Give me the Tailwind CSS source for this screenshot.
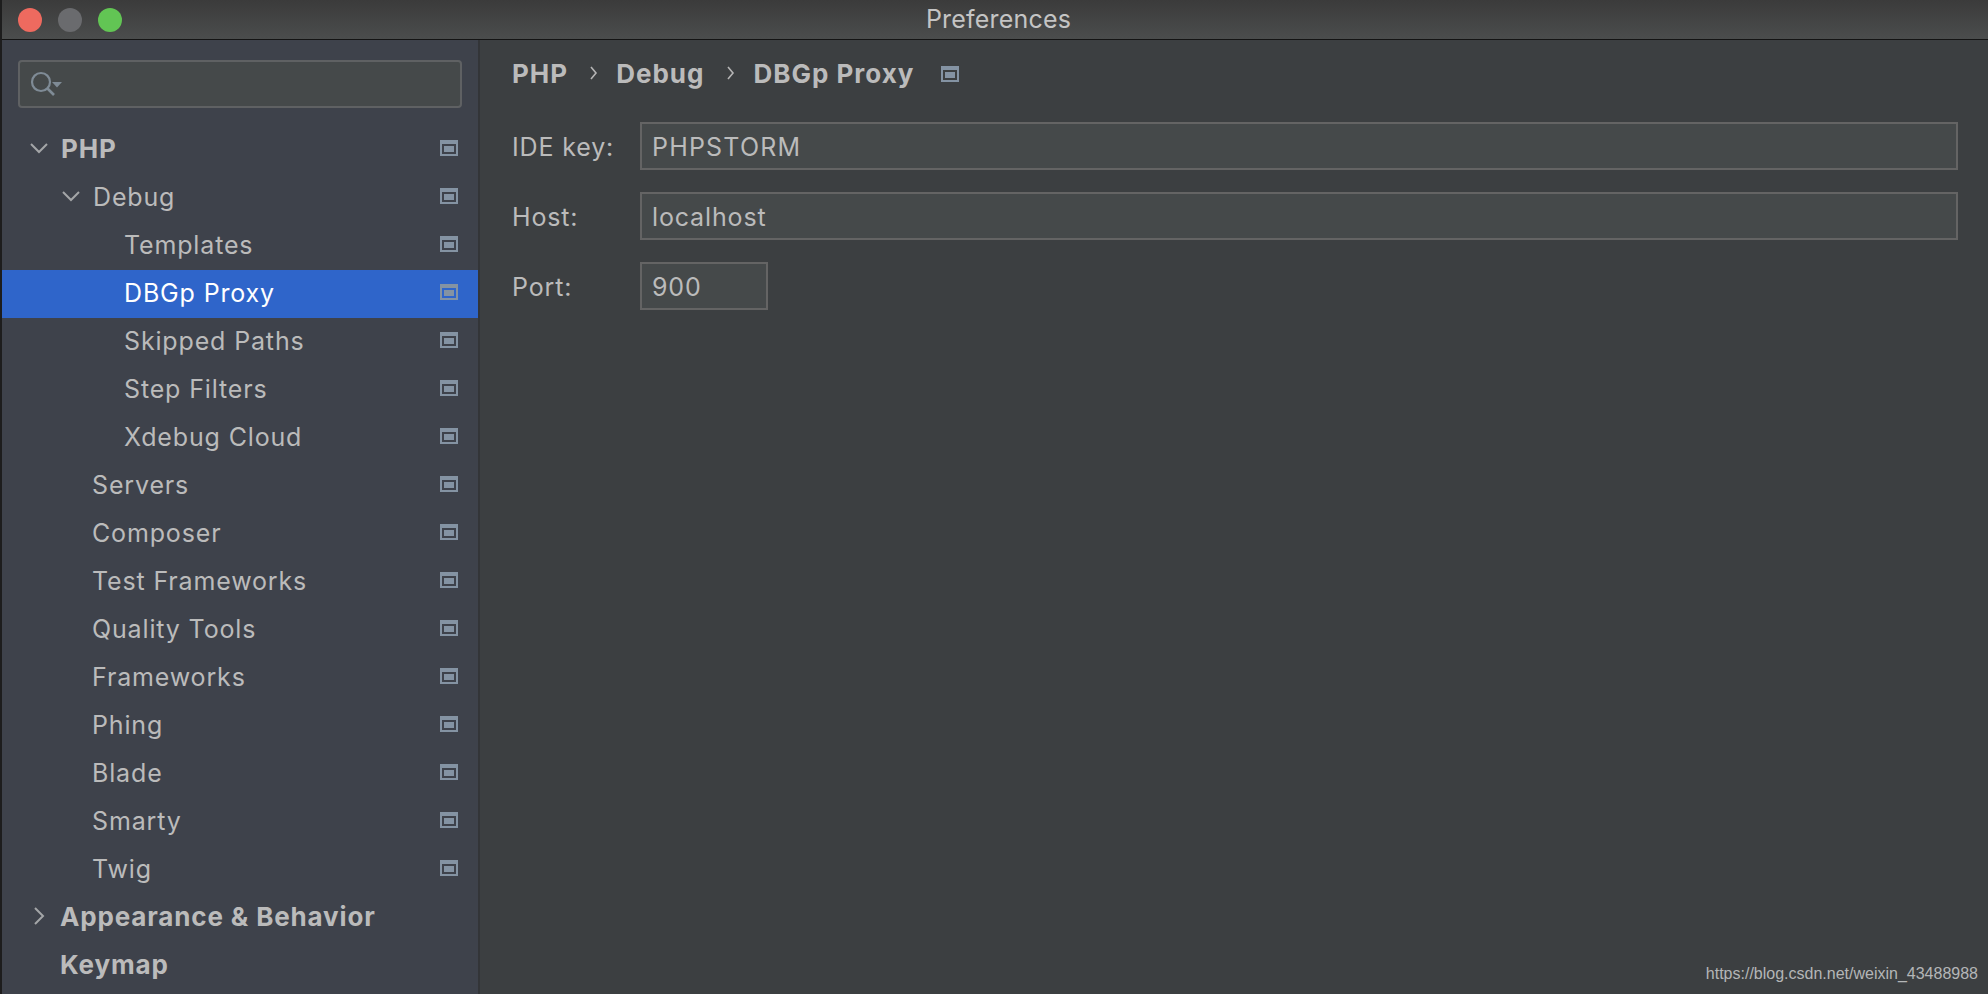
<!DOCTYPE html>
<html lang="en">
<head>
  <meta charset="UTF-8">
  <title>Preferences</title>
  <script src="https://cdn.jsdelivr.net/npm/@tailwindcss/browser@4"></script>
</head>
<body class="bg-[#3c3f41] font-['Inter',sans-serif] text-[#bbbbbb] overflow-hidden">
  <svg class="hidden">
    <symbol id="cfg" viewBox="0 0 18 16"><path fill-rule="evenodd" d="M0 0h18v16H0zM2 4v10h14V4z M4 6h10v6H4z" fill="#8493a3"/></symbol>
  </svg>
  <div class="h-[994px] w-[1988px] flex flex-col border-l-2 border-[#1d1d1d]">
    <!-- Title bar -->
    <header class="h-10 shrink-0 flex items-center relative bg-gradient-to-b from-[#3b3b3b] to-[#4b4d4d] border-b-[1.5px] border-[#141414]">
      <div class="flex gap-4 pl-4">
        <span class="w-6 h-6 rounded-full bg-[#ee6a5f]"></span>
        <span class="w-6 h-6 rounded-full bg-[#6a6b6e]"></span>
        <span class="w-6 h-6 rounded-full bg-[#62c554]"></span>
      </div>
      <div class="absolute left-0 right-0 text-center text-[25px] tracking-[0.2px] text-[#c4c4c4] pl-[7px]">Preferences</div>
    </header>

    <div class="flex flex-1 min-h-0">
      <!-- Sidebar -->
      <aside class="w-[478px] shrink-0 bg-[#3e424b] border-r-2 border-[#333538] text-[25px] tracking-[0.85px] overflow-hidden">
        <div class="pt-5 pb-4 pl-4 pr-4">
          <div class="h-12 rounded-[4px] border-2 border-[#5f6163] bg-[#45494a] flex items-center pl-[10px]">
            <svg width="34" height="26" viewBox="0 0 34 26" fill="none">
              <circle cx="11" cy="11" r="9" stroke="#7f8b96" stroke-width="2.2"/>
              <path d="M17 17l7 7" stroke="#7f8b96" stroke-width="2.6"/>
              <path d="M22 11h10l-5 5.500z" fill="#7f8b96"/>
            </svg>
          </div>
        </div>

        <div class="h-12 flex items-center pr-5 font-bold text-[26px]">
          <svg class="ml-[28px] mr-[13px]" width="18" height="12" viewBox="0 0 18 12" fill="none"><path d="M1 2l8 8 8-8" stroke="#a4a6a8" stroke-width="2"/></svg>
          <span class="flex-1">PHP</span>
          <svg class="w-[18px] h-4"><use href="#cfg"/></svg>
        </div>
        <div class="h-12 flex items-center pr-5">
          <svg class="ml-[60px] mr-[13px]" width="18" height="12" viewBox="0 0 18 12" fill="none"><path d="M1 2l8 8 8-8" stroke="#a4a6a8" stroke-width="2"/></svg>
          <span class="flex-1 pt-1">Debug</span>
          <svg class="w-[18px] h-4"><use href="#cfg"/></svg>
        </div>
        <div class="h-12 flex items-center pr-5 pl-[122px]"><span class="flex-1 pt-1">Templates</span><svg class="w-[18px] h-4"><use href="#cfg"/></svg></div>
        <div class="h-12 flex items-center pr-5 pl-[122px] relative text-white">
          <div class="absolute inset-x-0 top-[2px] h-12 bg-[#2f65ca]"></div>
          <span class="flex-1 pt-1 relative">DBGp Proxy</span><svg class="w-[18px] h-4 relative"><use href="#cfg"/></svg>
        </div>
        <div class="h-12 flex items-center pr-5 pl-[122px]"><span class="flex-1 pt-1">Skipped Paths</span><svg class="w-[18px] h-4 relative"><use href="#cfg"/></svg></div>
        <div class="h-12 flex items-center pr-5 pl-[122px]"><span class="flex-1 pt-1">Step Filters</span><svg class="w-[18px] h-4"><use href="#cfg"/></svg></div>
        <div class="h-12 flex items-center pr-5 pl-[122px]"><span class="flex-1 pt-1">Xdebug Cloud</span><svg class="w-[18px] h-4"><use href="#cfg"/></svg></div>
        <div class="h-12 flex items-center pr-5 pl-[90px]"><span class="flex-1 pt-1">Servers</span><svg class="w-[18px] h-4"><use href="#cfg"/></svg></div>
        <div class="h-12 flex items-center pr-5 pl-[90px]"><span class="flex-1 pt-1">Composer</span><svg class="w-[18px] h-4"><use href="#cfg"/></svg></div>
        <div class="h-12 flex items-center pr-5 pl-[90px]"><span class="flex-1 pt-1">Test Frameworks</span><svg class="w-[18px] h-4"><use href="#cfg"/></svg></div>
        <div class="h-12 flex items-center pr-5 pl-[90px]"><span class="flex-1 pt-1">Quality Tools</span><svg class="w-[18px] h-4"><use href="#cfg"/></svg></div>
        <div class="h-12 flex items-center pr-5 pl-[90px]"><span class="flex-1 pt-1">Frameworks</span><svg class="w-[18px] h-4"><use href="#cfg"/></svg></div>
        <div class="h-12 flex items-center pr-5 pl-[90px]"><span class="flex-1 pt-1">Phing</span><svg class="w-[18px] h-4"><use href="#cfg"/></svg></div>
        <div class="h-12 flex items-center pr-5 pl-[90px]"><span class="flex-1 pt-1">Blade</span><svg class="w-[18px] h-4"><use href="#cfg"/></svg></div>
        <div class="h-12 flex items-center pr-5 pl-[90px]"><span class="flex-1 pt-1">Smarty</span><svg class="w-[18px] h-4"><use href="#cfg"/></svg></div>
        <div class="h-12 flex items-center pr-5 pl-[90px]"><span class="flex-1 pt-1">Twig</span><svg class="w-[18px] h-4"><use href="#cfg"/></svg></div>
        <div class="h-12 flex items-center font-bold text-[26px]">
          <svg class="ml-[31px] mr-[15px]" width="12" height="18" viewBox="0 0 12 18" fill="none"><path d="M2 1l8 8-8 8" stroke="#a4a6a8" stroke-width="2"/></svg>
          <span>Appearance &amp; Behavior</span>
        </div>
        <div class="h-12 flex items-center font-bold text-[26px] pl-[58px]">Keymap</div>
      </aside>

      <!-- Content -->
      <main class="flex-1 relative pl-8 pr-[30px] text-[25px] tracking-[0.85px]">
        <div class="h-[66px] flex items-center font-bold text-[26px] tracking-[1px]">
          <span>PHP</span>
          <svg class="ml-[22px] mr-[18px]" width="8" height="14" viewBox="0 0 8 14" fill="none"><path d="M1 1l5 6-5 6" stroke="#b5b5b5" stroke-width="1.600"/></svg>
          <span>Debug</span>
          <svg class="ml-[23px] mr-[18px]" width="8" height="14" viewBox="0 0 8 14" fill="none"><path d="M1 1l5 6-5 6" stroke="#b5b5b5" stroke-width="1.600"/></svg>
          <span>DBGp Proxy</span>
          <svg class="w-[18px] h-4 ml-[27px] mt-[2px]"><use href="#cfg"/></svg>
        </div>
        <div class="flex flex-col gap-[22px] mt-4">
          <div class="flex items-center">
            <label class="w-[128px] shrink-0 whitespace-nowrap pt-1">IDE key:</label>
            <div class="h-12 flex-1 flex items-center px-[10px] pt-1 border-2 border-[#646464] bg-[#45494a] tracking-[1.200px]">PHPSTORM</div>
          </div>
          <div class="flex items-center">
            <label class="w-[128px] shrink-0 whitespace-nowrap pt-1">Host:</label>
            <div class="h-12 flex-1 flex items-center px-[10px] pt-1 border-2 border-[#646464] bg-[#45494a]">localhost</div>
          </div>
          <div class="flex items-center">
            <label class="w-[128px] shrink-0 whitespace-nowrap pt-1">Port:</label>
            <div class="h-12 w-[128px] flex items-center px-[10px] pt-1 border-2 border-[#646464] bg-[#45494a]">900</div>
          </div>
        </div>
        <div class="absolute right-[10px] bottom-2 text-base tracking-normal text-[#b4b6b7] font-['Liberation_Sans',sans-serif]">https://blog.csdn.net/weixin_43488988</div>
      </main>
    </div>
  </div>
</body>
</html>
